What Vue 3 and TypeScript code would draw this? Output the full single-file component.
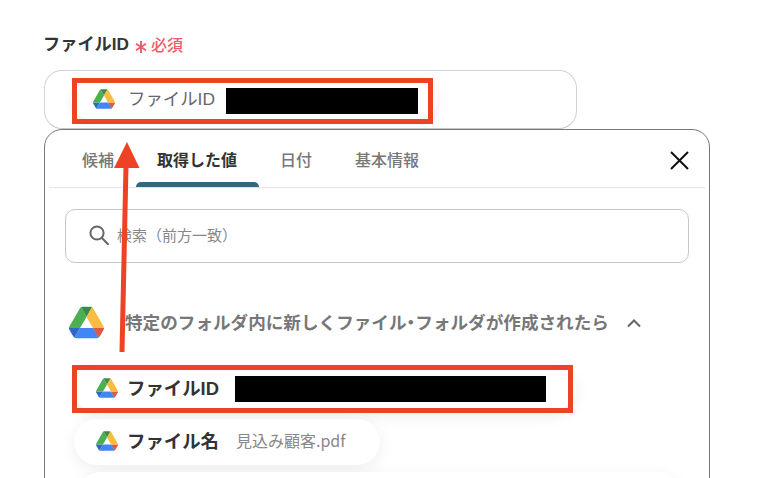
<script setup lang="ts">
const tabs = [
  { label: "候補", active: false },
  { label: "取得した値", active: true },
  { label: "日付", active: false },
  { label: "基本情報", active: false },
];

const driveParts = [
  { d: "m6.6 66.85 3.85 6.65c.8 1.4 1.95 2.5 3.3 3.3l13.75-23.8h-27.5c0 1.55.4 3.1 1.2 4.5z", fill: "#2f68c9" },
  { d: "m43.65 25-13.75-23.8c-1.35.8-2.5 1.9-3.3 3.3l-25.4 44a9.06 9.06 0 0 0 -1.2 4.5h27.5z", fill: "#4caf50" },
  { d: "m73.55 76.8c1.35-.8 2.5-1.9 3.3-3.3l1.6-2.75 7.65-13.25c.8-1.4 1.2-2.95 1.2-4.5h-27.502l5.852 11.5z", fill: "#db5a45" },
  { d: "m43.65 25 13.75-23.8c-1.35-.8-2.9-1.2-4.5-1.2h-18.5c-1.6 0-3.15.45-4.5 1.2z", fill: "#3b8a48" },
  { d: "m59.8 53h-32.3l-13.75 23.8c1.35.8 2.9 1.2 4.5 1.2h50.8c1.6 0 3.15-.45 4.5-1.2z", fill: "#4285f4" },
  { d: "m73.4 26.5-12.7-22c-.8-1.4-1.95-2.5-3.3-3.3l-13.75 23.8 16.15 28h27.45c0-1.55-.4-3.1-1.2-4.5z", fill: "#f9bc41" },
];
</script>

<template>
  <div class="page">
    <div class="label">
      <span class="label-text">ファイルID</span>
      <svg class="asterisk" viewBox="0 0 12 12" width="12" height="12">
        <path d="M6 0v12M1 2.8l10 6.4M11 2.8L1 9.2" stroke="#f05a6a" stroke-width="1.9" fill="none" />
      </svg>
      <span class="required">必須</span>
    </div>

    <div class="field">
      <div class="field-chip">
        <svg class="drive" viewBox="0 0 87.3 78" width="22" height="20">
          <path v-for="p in driveParts" :key="p.d" :d="p.d" :fill="p.fill" />
        </svg>
        <span class="field-name">ファイルID</span>
        <span class="redact field-redact"></span>
      </div>
    </div>

    <div class="panel">
      <div class="tabs">
        <button
          v-for="tab in tabs"
          :key="tab.label"
          class="tab"
          :class="{ active: tab.active }"
        >
          {{ tab.label }}
        </button>
        <svg class="close" viewBox="0 0 19 19" width="19" height="19">
          <path d="M1 1l17 17M18 1L1 18" stroke="#111" stroke-width="2" fill="none" />
        </svg>
      </div>

      <div class="search">
        <svg viewBox="0 0 20 20" width="20" height="20">
          <circle cx="8" cy="8" r="6.6" stroke="#666" stroke-width="2" fill="none" />
          <path d="M13 13l6 6.2" stroke="#666" stroke-width="2" stroke-linecap="round" />
        </svg>
        <span>検索（前方一致）</span>
      </div>

      <div class="section">
        <svg viewBox="0 0 87.3 78" width="35" height="33">
          <path v-for="p in driveParts" :key="p.d" :d="p.d" :fill="p.fill" />
        </svg>
        <span class="section-title">特定のフォルダ内に新しくファイル<span class="dot">・</span>フォルダが作成されたら</span>
        <svg class="chevron" viewBox="0 0 16 10" width="16" height="10">
          <path d="M2 8.500l6-6 6 6" stroke="#666" stroke-width="2" fill="none" />
        </svg>
      </div>

      <div class="pills">
        <div class="pill pill-id">
          <svg viewBox="0 0 87.3 78" width="22" height="20">
            <path v-for="p in driveParts" :key="p.d" :d="p.d" :fill="p.fill" />
          </svg>
          <span class="pill-name">ファイルID</span>
          <span class="redact pill-redact"></span>
        </div>
        <div class="pill pill-file">
          <svg viewBox="0 0 87.3 78" width="22" height="20">
            <path v-for="p in driveParts" :key="p.d" :d="p.d" :fill="p.fill" />
          </svg>
          <span class="pill-name">ファイル名</span>
          <span class="pill-value">見込み顧客.pdf</span>
        </div>
        <div class="pill pill-next"></div>
      </div>
    </div>

    <!-- annotations laid over the screenshot -->
    <div class="mark mark-top"></div>
    <div class="mark mark-bottom"></div>
    <svg class="arrow" viewBox="0 0 40 220" width="40" height="220">
      <path d="M9 210L13 24" stroke="#ee4225" stroke-width="5" fill="none" />
      <path d="M14 0L26.500 26H1z" fill="#ee4225" />
    </svg>
  </div>
</template>

<style>
html,
body {
  margin: 0;
  background: #fff;
}
</style>

<style scoped>
.page {
  position: relative;
  box-sizing: border-box;
  width: 764px;
  height: 478px;
  overflow: hidden;
  padding: 32px 54px 0 44px;
  background: #fff;
  font-family: "Noto Sans CJK JP", "Noto Sans", sans-serif;
}

.label {
  display: flex;
  align-items: center;
  height: 24px;
  margin-bottom: 14px;
}

.label-text {
  margin: 0 0 3px -1px;
  color: #333;
  font-size: 17.2px;
  font-weight: 700;
  font-family: "Liberation Sans", "Noto Sans CJK JP", sans-serif;
}

.asterisk {
  margin: 5px 5px 0 6px;
}

.required {
  margin: 0 0 1px -1px;
  color: #f05a6a;
  font-size: 16px;
  font-weight: 500;
}

.field {
  box-sizing: border-box;
  display: flex;
  align-items: center;
  width: 533px;
  height: 59px;
  padding-left: 26px;
  border: 1px solid #d0d3d8;
  border-bottom-color: #c4c8cc;
  border-radius: 18px;
}

.field-chip {
  display: flex;
  align-items: center;
  width: 367px;
  height: 40px;
  margin-top: -1px;
  padding-left: 22px;
  box-sizing: border-box;
  border-radius: 20px;
  box-shadow: 0 3px 12px rgba(0, 0, 0, 0.07);
}

.field-name {
  margin: 0 0 4px 13px;
  color: #666;
  font-size: 17.4px;
  font-family: "Liberation Sans", "Noto Sans CJK JP", sans-serif;
}

.redact {
  display: block;
  height: 26px;
  background: #000;
}

.field-redact {
  width: 192px;
  margin: 4px 0 0 11px;
}

.panel {
  box-sizing: border-box;
  width: 666px;
  height: 420px;
  padding: 0 4px;
  border: 1px solid #777;
  border-radius: 18px;
}

.tabs {
  position: relative;
  display: flex;
  height: 57px;
  padding-left: 11px;
  border-bottom: 1px solid #e2e4e6;
}

.tab {
  position: relative;
  height: 57px;
  padding: 0 21.5px;
  border: 0;
  background: none;
  color: #777;
  font: 500 16px "Noto Sans CJK JP", sans-serif;
}

.tab:first-child {
  padding-left: 22px;
}

.tab.active {
  color: #333;
  font-weight: 700;
}

.tab.active::after {
  content: "";
  position: absolute;
  left: 0;
  right: 0;
  bottom: 0;
  height: 5px;
  background: #2f6880;
  border-radius: 5px 5px 0 0;
}

.close {
  position: absolute;
  top: 21px;
  right: 16px;
}

.search {
  box-sizing: border-box;
  display: flex;
  align-items: center;
  gap: 8px;
  width: 624px;
  height: 54px;
  margin: 21px 0 0 16px;
  padding: 0 0 2px 23px;
  border: 1px solid #c8c8c8;
  border-radius: 10px;
  color: #888;
  font-size: 15px;
}

.search span {
  margin-bottom: 2px;
}

.section {
  display: flex;
  align-items: center;
  height: 46px;
  margin: 36px 0 0 20px;
}

.section-title {
  margin: 0 0 2px 21px;
  color: #777;
  font-size: 17.6px;
  font-weight: 700;
  white-space: nowrap;
}

.dot {
  font-feature-settings: "palt";
}

.chevron {
  margin: 2px 0 0 17px;
}

.pills {
  display: flex;
  flex-direction: column;
  gap: 7px;
  margin: 21px 0 0 25px;
}

.pill {
  box-sizing: border-box;
  display: flex;
  align-items: center;
  flex: none;
  height: 46px;
  padding-left: 22px;
  border-radius: 23px;
  background: #fff;
  box-shadow: 0 4px 16px rgba(0, 0, 0, 0.07);
}

.pill svg {
  margin-bottom: 3px;
}

.pill-id {
  width: 502px;
}

.pill-file {
  width: 306px;
}

.pill-next {
  width: 602px;
  margin-left: 4px;
}

.pill-name {
  margin: 0 0 4px 9px;
  color: #333;
  font-size: 18.4px;
  font-weight: 700;
}

.pill-id .pill-name {
  font-family: "Liberation Sans", "Noto Sans CJK JP", sans-serif;
}

.pill-value {
  margin: 0 0 4px 17px;
  color: #888;
  font-size: 16px;
}

.pill-redact {
  width: 311px;
  margin-left: 16px;
}

.mark {
  position: absolute;
  box-sizing: border-box;
  border: 5px solid #ee4225;
}

.mark-top {
  left: 72px;
  top: 78px;
  width: 361px;
  height: 46px;
}

.mark-bottom {
  left: 72px;
  top: 365px;
  width: 501px;
  height: 48px;
}

.arrow {
  position: absolute;
  left: 113px;
  top: 142px;
}
</style>
